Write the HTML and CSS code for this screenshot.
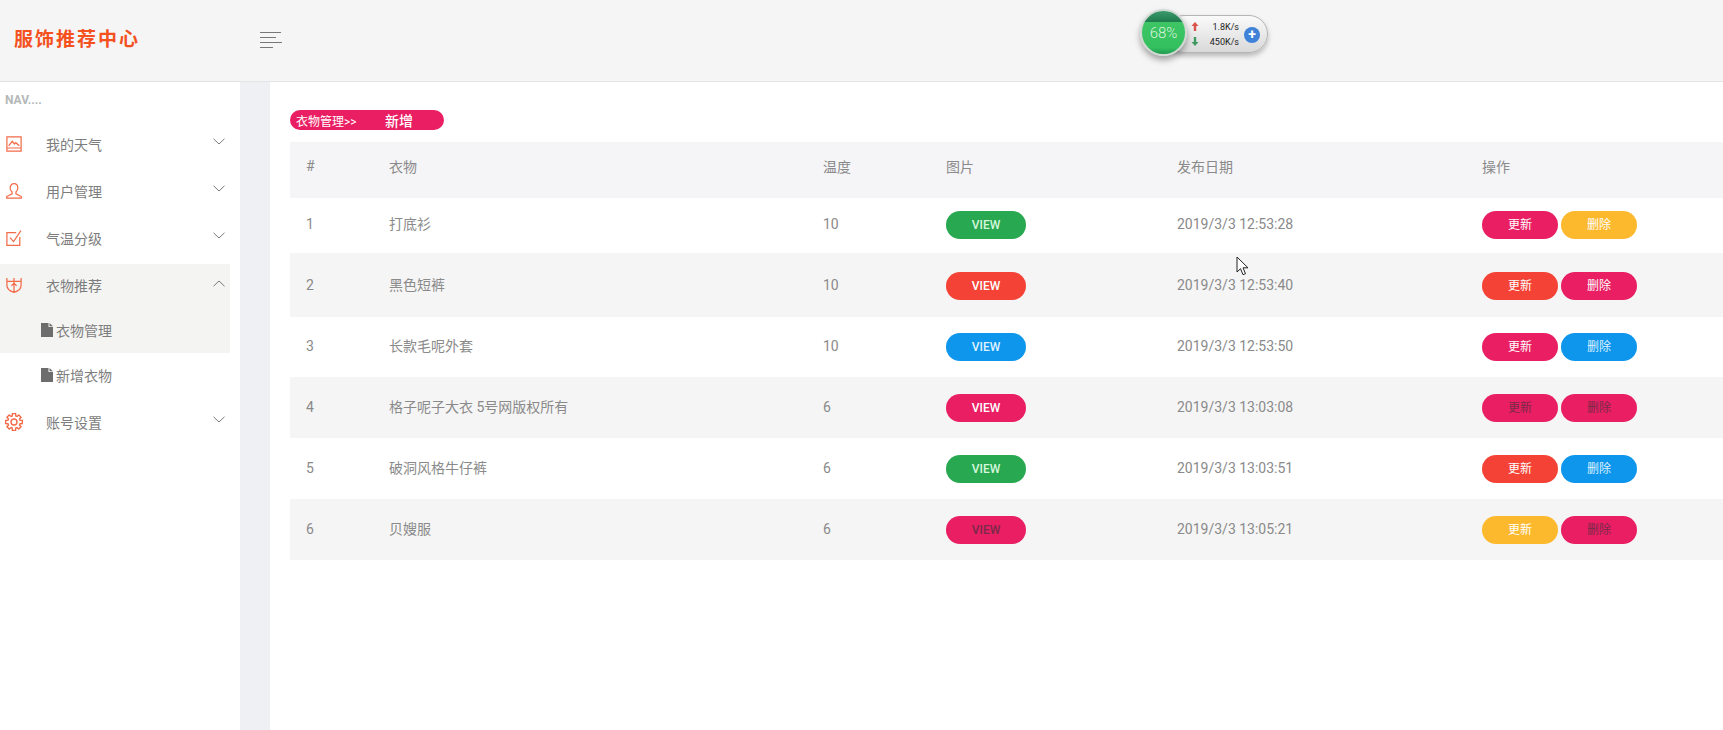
FILE: index.html
```html
<!DOCTYPE html>
<html lang="zh">
<head>
<meta charset="utf-8">
<title>服饰推荐中心</title>
<link rel="stylesheet" href="styles.css">
</head>
<body>
<header class="topbar">
  <div class="brand">服饰推荐中心</div>
  <button class="burger" aria-label="menu"><i class="l1"></i><i class="l2"></i><i class="l3"></i><i class="l4"></i></button>
</header>
<div class="speed">
  <div class="speed-pill">
    <div class="speed-arrows">
      <svg width="8" height="9" viewBox="0 0 8 9"><path d="M4 0 7.500 4H5.200V9H2.800V4H.5Z" fill="#d9534a"/></svg>
      <svg width="8" height="9" viewBox="0 0 8 9"><path d="M4 9 .5 5H2.800V0H5.200V5H7.500Z" fill="#3f9a62"/></svg>
    </div>
    <div class="speed-nums"><span>1.8K/s</span><span>450K/s</span></div>
    <div class="speed-plus">+</div>
  </div>
  <div class="speed-ball"><span>68%</span></div>
</div>
<div class="layout">
  <aside class="sidebar">
    <div class="nav-title">NAV....</div>
    <ul class="menu">
      <li class="item">
        <svg class="ico" viewBox="0 0 18 18"><path d="M1 1h16v16H1zM1 13.500h16M3 11l4-5 2.500 3 1.500-1.500 4 3.500"/></svg>
        <span class="label">我的天气</span>
        <svg class="chev" viewBox="0 0 12 7"><path d="M.5.800 6 6 11.500.8"/></svg>
      </li>
      <li class="item">
        <svg class="ico" viewBox="0 0 18 18"><path d="M9 .8c2.700 0 4.300 2.200 4.300 4.800 0 2-1 3.600-2.100 4.600v2l6 3v1.800H.8v-1.800l6-3v-2C5.700 9.200 4.700 7.600 4.700 5.600 4.700 3 6.300.8 9 .8z"/></svg>
        <span class="label">用户管理</span>
        <svg class="chev" viewBox="0 0 12 7"><path d="M.5.800 6 6 11.500.8"/></svg>
      </li>
      <li class="item">
        <svg class="ico" viewBox="0 0 18 18"><path d="M15.500 8v9.200H1V3h10.500M4.500 8.500 8.500 13 16.800.8"/></svg>
        <span class="label">气温分级</span>
        <svg class="chev" viewBox="0 0 12 7"><path d="M.5.800 6 6 11.500.8"/></svg>
      </li>
      <li class="item active">
        <svg class="ico" viewBox="0 0 18 18"><path d="M1 1v8c0 4.500 3.500 7 8 8.200 4.500-1.200 8-3.700 8-8.200V1M1 5h16M9 1v16.200M6 10l3-3 3 3"/></svg>
        <span class="label">衣物推荐</span>
        <svg class="chev" viewBox="0 0 12 7"><path d="M.5 6.200 6 1l5.500 5.200"/></svg>
      </li>
      <li class="sub active">
        <svg class="doc" viewBox="0 0 12 14"><path d="M0 0h7.500v4H12v10H0zM8.500 0 12 3.200H8.500z"/></svg>
        <span>衣物管理</span>
      </li>
      <li class="sub">
        <svg class="doc" viewBox="0 0 12 14"><path d="M0 0h7.500v4H12v10H0zM8.500 0 12 3.200H8.500z"/></svg>
        <span>新增衣物</span>
      </li>
      <li class="item">
        <svg class="ico gear" viewBox="0 0 18 18"><path d="M7.260 2.950 7.380.66H10.620L10.740 2.950 12.050 3.490 13.750 1.950 16.050 4.250 14.510 5.950 15.050 7.260 17.340 7.380V10.620L15.050 10.740 14.510 12.050 16.050 13.750 13.750 16.050 12.050 14.510 10.740 15.050 10.620 17.340H7.380L7.260 15.050 5.950 14.510 4.250 16.050 1.950 13.750 3.490 12.050 2.950 10.740.66 10.620V7.380L2.950 7.260 3.490 5.950 1.950 4.250 4.250 1.950 5.950 3.490Z"/><circle cx="9" cy="9" r="3"/></svg>
        <span class="label">账号设置</span>
        <svg class="chev" viewBox="0 0 12 7"><path d="M.5.800 6 6 11.500.8"/></svg>
      </li>
    </ul>
  </aside>
  <div class="gutter"></div>
  <main class="content">
    <div class="crumb"><span class="crumb-a">衣物管理&gt;&gt;</span><span class="crumb-b">新增</span></div>
    <table class="grid">
      <colgroup>
        <col class="c1"><col class="c2"><col class="c3"><col class="c4"><col class="c5"><col class="c6">
      </colgroup>
      <thead>
        <tr><th>#</th><th>衣物</th><th>温度</th><th>图片</th><th>发布日期</th><th>操作</th></tr>
      </thead>
      <tbody>
        <tr class="r1">
          <td>1</td><td>打底衫</td><td>10</td>
          <td><a class="pill view green">VIEW</a></td>
          <td>2019/3/3 12:53:28</td>
          <td><div class="ops"><a class="pill op pink">更新</a><a class="pill op amber">删除</a></div></td>
        </tr>
        <tr class="r2 alt">
          <td>2</td><td>黑色短裤</td><td>10</td>
          <td><a class="pill view red">VIEW</a></td>
          <td>2019/3/3 12:53:40</td>
          <td><div class="ops"><a class="pill op red">更新</a><a class="pill op pink">删除</a></div></td>
        </tr>
        <tr class="r3">
          <td>3</td><td>长款毛呢外套</td><td>10</td>
          <td><a class="pill view blue">VIEW</a></td>
          <td>2019/3/3 12:53:50</td>
          <td><div class="ops"><a class="pill op pink">更新</a><a class="pill op blue">删除</a></div></td>
        </tr>
        <tr class="alt">
          <td>4</td><td>格子呢子大衣 5号网版权所有</td><td>6</td>
          <td><a class="pill view pink">VIEW</a></td>
          <td>2019/3/3 13:03:08</td>
          <td><div class="ops"><a class="pill op pink dark">更新</a><a class="pill op pink dark">删除</a></div></td>
        </tr>
        <tr>
          <td>5</td><td>破洞风格牛仔裤</td><td>6</td>
          <td><a class="pill view green">VIEW</a></td>
          <td>2019/3/3 13:03:51</td>
          <td><div class="ops"><a class="pill op red">更新</a><a class="pill op blue">删除</a></div></td>
        </tr>
        <tr class="alt">
          <td>6</td><td>贝嫂服</td><td>6</td>
          <td><a class="pill view pink dark">VIEW</a></td>
          <td>2019/3/3 13:05:21</td>
          <td><div class="ops"><a class="pill op amber">更新</a><a class="pill op pink dark">删除</a></div></td>
        </tr>
      </tbody>
    </table>
  </main>
</div>
<svg class="cursor" width="13" height="20" viewBox="0 0 13 20"><path d="M1 1v15l3.500-3.300 2.500 6 2.500-1-2.500-5.900h5z" fill="#fff" stroke="#222" stroke-width="1"/></svg>
</body>
</html>
```

FILE: styles.css
```css
* { box-sizing: border-box; }
html, body { margin: 0; height: 100%; }
body {
  display: flex;
  flex-direction: column;
  height: 730px;
  overflow: hidden;
  background: #fff;
  color: #8a8a8a;
  font-family: Roboto, "Noto Sans CJK SC", sans-serif;
  font-size: 14px;
}
.topbar {
  flex: 0 0 82px;
  display: flex;
  align-items: center;
  background: #f5f5f6;
  border-bottom: 1px solid #e4e5e7;
  padding-bottom: 6px;
}
.brand {
  width: 260px;
  padding-left: 14px;
  color: #f4511e;
  font-size: 19px;
  font-weight: 700;
  letter-spacing: 2px;
  white-space: nowrap;
}
.burger {
  display: flex;
  flex-direction: column;
  gap: 4px;
  width: 22px;
  padding: 0;
  margin-top: 5px;
  border: 0;
  background: none;
}
.burger i { display: block; height: 1px; background: #777; }
.l1 { width: 21px; }
.l2 { width: 16px; }
.l3 { width: 22px; }
.l4 { width: 13px; }

.speed {
  position: absolute;
  left: 1140px;
  top: 9px;
  width: 130px;
  height: 48px;
}
.speed-pill {
  position: absolute;
  left: 25px;
  top: 6px;
  width: 103px;
  height: 38px;
  display: flex;
  align-items: center;
  padding: 0 7px 0 25px;
  border: 1px solid #b5b5b5;
  border-radius: 19px;
  background: linear-gradient(#fafafa, #d9d9d9);
  box-shadow: 0 3px 5px rgba(0,0,0,.25);
  color: #222;
  font-size: 9px;
  font-weight: 400;
}
.speed-arrows { display: flex; flex-direction: column; gap: 6px; width: 12px; }
.speed-arrows svg { display: block; }
.speed-nums {
  flex: 1;
  display: flex;
  flex-direction: column;
  align-items: flex-end;
  gap: 4px;
  padding-top: 2px;
  line-height: 11px;
}
.speed-plus {
  flex: 0 0 16px;
  height: 16px;
  margin: 2px 0 0 5px;
  border-radius: 50%;
  background: #3f82d8;
  color: #fff;
  font-size: 14px;
  font-weight: 700;
  line-height: 15px;
  text-align: center;
}
.speed-ball {
  position: absolute;
  left: 0;
  top: 0;
  width: 47px;
  height: 47px;
  display: flex;
  align-items: center;
  justify-content: center;
  border: 2px solid #cfd8d2;
  border-radius: 50%;
  background: linear-gradient(#3a9a6c 0, #1f7a4c 26%, #3ec565 26%, #34c05e 85%, #1f9a50 100%);
  box-shadow: 0 4px 6px rgba(0,0,0,.35);
  color: #d9f5dd;
  font-size: 15px;
  font-weight: 300;
}

.layout { flex: 1; display: flex; min-height: 0; }
.sidebar {
  flex: 0 0 240px;
  background: #fff;
  box-shadow: 1px 0 3px rgba(0,0,0,.05);
}
.gutter { flex: 0 0 30px; background: #eef0f4; }
.content { flex: 1; min-width: 0; padding: 28px 0 0 20px; }

.nav-title {
  padding: 11px 0 0 5px;
  height: 38px;
  color: #b4b8b8;
  font-size: 12px;
  font-weight: 700;
}
.menu { margin: 0; padding: 0; list-style: none; }
.item {
  height: 47px;
  display: flex;
  align-items: center;
  padding: 0 15px 0 6px;
}
.item.active {
  height: 44px;
  margin: 3px 10px 0 0;
  padding: 0 5px 2px 6px;
  background: #f4f4f3;
}
.sub.active { background: #f4f4f3; margin-right: 10px; }
.ico {
  flex: 0 0 16px;
  width: 16px;
  height: 16px;
  fill: none;
  stroke: #f26c4a;
  stroke-width: 1.4;
}
.gear { flex-basis: 18px; width: 18px; height: 18px; margin-left: -1px; }
.gear + .label { padding-left: 23px; }
.label { flex: 1; padding-left: 24px; color: #7d7d7d; font-size: 14px; }
.chev {
  width: 12px;
  height: 7px;
  margin-top: -4px;
  fill: none;
  stroke: #7a7a7a;
  stroke-width: 1;
}
.sub {
  height: 45px;
  display: flex;
  align-items: center;
  gap: 3px;
  padding: 0 0 2px 41px;
  color: #7d7d7d;
  font-size: 14px;
}
.doc { width: 12px; height: 14px; fill: #6d6d6d; }

.crumb {
  width: 154px;
  height: 20px;
  display: flex;
  align-items: center;
  padding-left: 6px;
  border-radius: 10px;
  background: #e91e63;
  color: #fff;
  font-size: 12px;
}
.crumb-a { width: 89px; white-space: nowrap; }
.crumb-b { font-size: 14px; font-weight: 500; }

.grid {
  width: 1433px;
  margin-top: 12px;
  border-collapse: collapse;
  table-layout: fixed;
}
.c1 { width: 83px; }
.c2 { width: 434px; }
.c3 { width: 123px; }
.c4 { width: 231px; }
.c5 { width: 305px; }
.grid th, .grid td { padding-left: 16px; text-align: left; font-weight: 400; white-space: nowrap; }
.grid th { height: 56px; padding-bottom: 10px; background: #f5f5f7; }
.grid td { height: 61px; padding-top: 17px; line-height: 26px; vertical-align: top; }
.grid tr.r1 td { height: 55px; padding-top: 13px; }
.grid tr.r2 td { height: 64px; padding-top: 19px; }
.grid tr.r3 td { height: 60px; padding-top: 16px; }
.grid tr.alt td { background: #f5f5f5; }

.ops { display: flex; gap: 3px; }
.pill {
  display: flex;
  align-items: center;
  justify-content: center;
  height: 28px;
  border-radius: 14px;
  color: #fff;
  font-size: 12px;
}
.view { width: 80px; font-weight: 500; }
.op { width: 76px; }
.green { background: #28a850; color: #d4f7dc; }
.red { background: #f44336; }
.blue { background: #0d96ec; color: #dff1ff; }
.pink { background: #e91e63; }
.amber { background: #fdb92e; }
.dark { color: #7a2a48; }

.cursor { position: absolute; left: 1236px; top: 256px; }
```
